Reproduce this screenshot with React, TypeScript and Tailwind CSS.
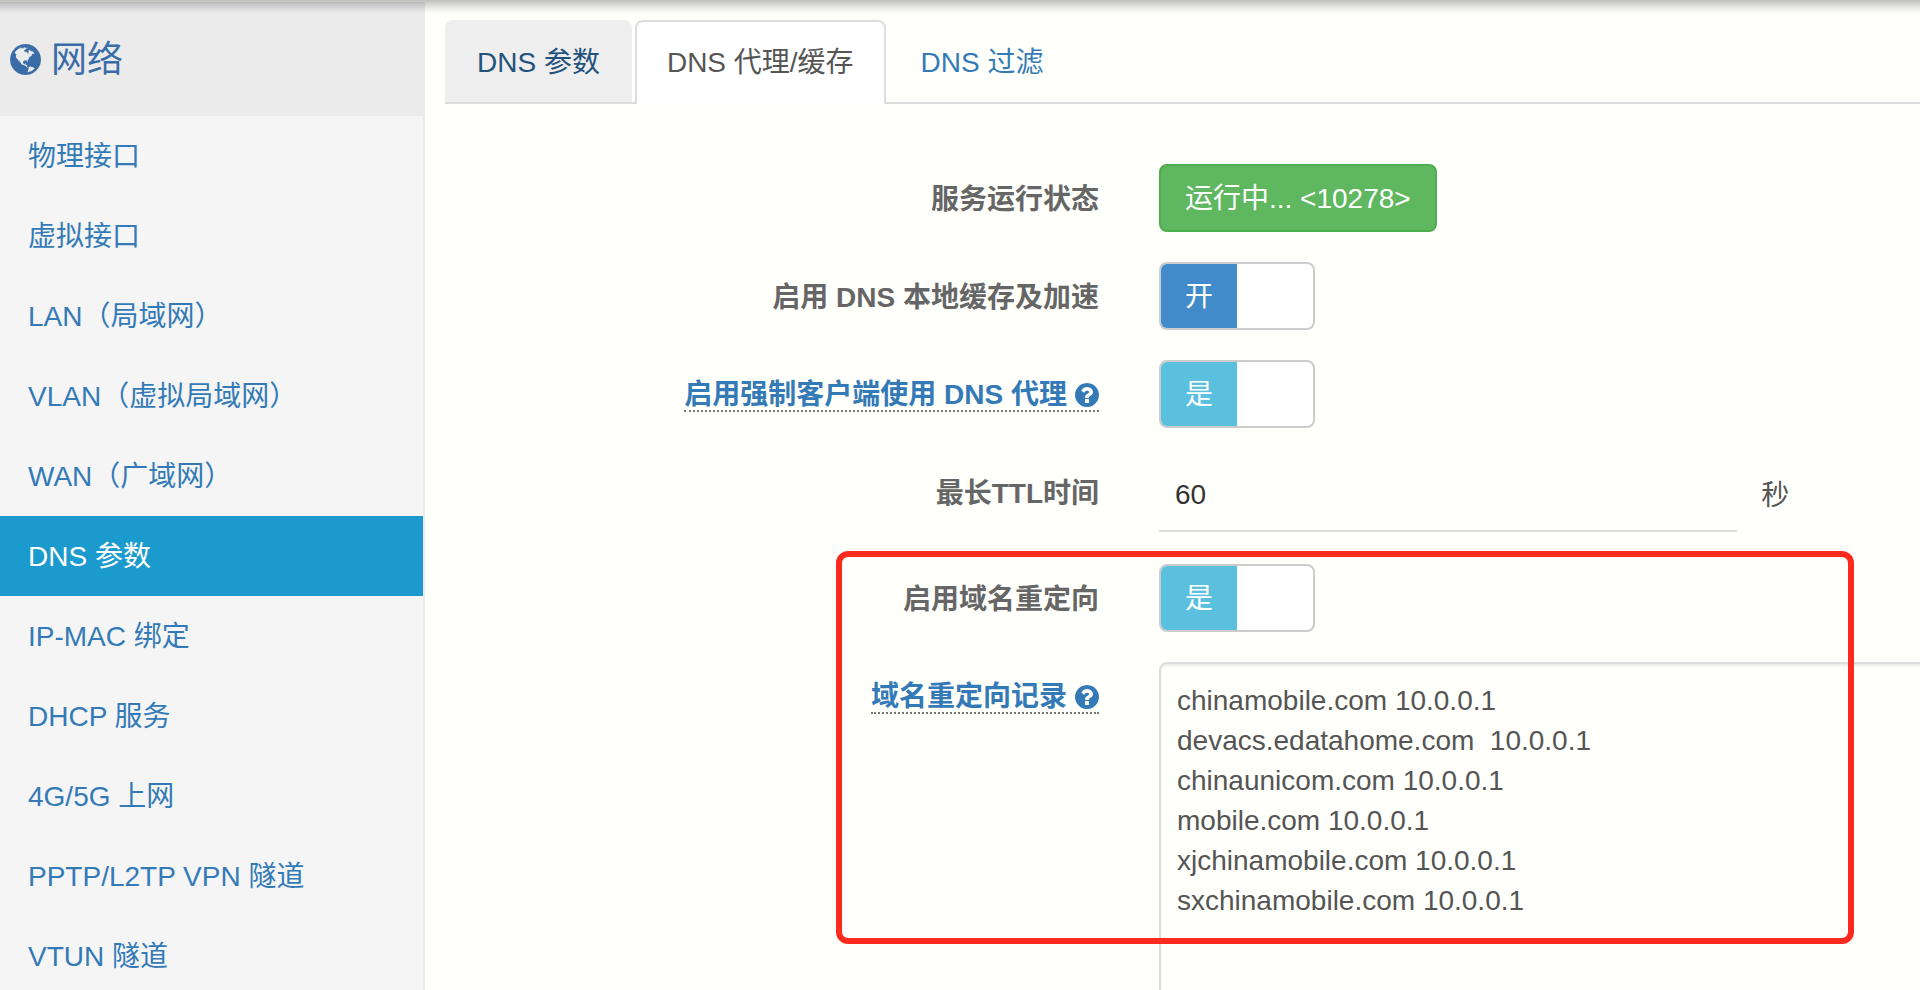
import { useState } from "react";

const GLOBE_PATH =
  "M768 128q209 0 385.5 103t279.5 279.5 103 385.5-103 385.5-279.5 279.5-385.5 103-385.5-103-279.5-279.5-103-385.5 103-385.5 279.5-279.5 385.5-103zm274 521q-2 1-9.5 9.5t-13.5 9.5q2 0 4.5-5t5-11 3.5-7q6-7 22-15 14-6 52-12 34-8 51 11-2-2 9.5-13t14.5-12q3-2 15-4.5t15-7.5l2-22q-12 1-17.5-7t-6.5-21q0 2-6 8 0-7-4.5-8t-11.5 1-9 1q-10-3-15-7.5t-8-16.5-4-15q-2-5-9.5-11t-9.5-10q-1-2-2.5-5.5t-3-6.5-4-5.5-5.5-2.5-7 5-7.5 10-4.5 5q-3-2-6-1.5t-4.5 1-4.5 3-5 3.5q-3 2-8.5 3t-8.5 2q15-5-1-11-10-4-16-3 9-4 7.5-12t-8.5-14h5q-1-4-8.5-8.5t-17.5-8.5-13-6q-8-5-34-9.5t-33-.5q-5 6-4.5 10.5t4 14 3.5 12.5q1 6-5.5 13t-6.5 12q0 7 14 15.5t10 21.5q-3 8-16 16t-16 12q-5 8-1.5 18.5t10.5 16.5q2 2 1.5 4t-3.5 4.5-5.5 4-6.5 3.5l-3 2q-11 5-20.5-6t-13.5-26q-7-25-16-30-23-8-29 1-5-13-41-26-25-9-58-4 6-1 0-15-7-15-19-12 3-6 4-17.5t1-13.5q3-13 12-23 1-1 7-8.5t9.5-13.5.5-6q35 4 50-11 5-5 11.5-17t10.5-17q9-6 14-5.5t14.5 5.5 14.5 5q14 1 15.5-11t-7.5-20q12 1 3-17-4-7-8-9-12-4-27 5-8 4 2 8-1-1-9.5 10.5t-16.5 17.5-16-5q-1-1-5.5-13.5t-9.5-13.5q-8 0-16 15 3-8-11-15t-24-8q19-12-8-27-7-4-20.5-5t-19.5 4q-5 7-5.5 11.5t5 8 10.5 5.5 11.5 4 8.5 3q14 10 8 14-2 1-8.5 3.5t-11.5 4.5-6 4q-3 4 0 14t-2 14q-5-5-9-17.5t-7-16.5q7 9-25 6l-10-1q-4 0-16 2t-20.5 1-13.5-8q-4-8 0-20 1-4 4-2-4-3-11-9.5t-10-8.5q-46 15-94 41 6 1 12-1 5-2 13-6.5t10-5.5q34-14 42-7l5-5q14 16 20 25-7-4-30-1-20 6-22 12 7 12 5 18-4-3-11.5-10t-14.5-11-15-5q-16 0-22 1-146 80-235 222 7 7 12 8 4 1 5 9t2.5 11 11.5-3q9 8 3 19 1-1 44 27 19 17 21 21 3 11-10 18-1-2-9-9t-9-4q-3 5 .5 18.5t10.5 12.5q-7 0-9.5 16t-2.5 35.5-1 23.5l2 1q-3 12 5.5 34.5t21.5 19.5q-13 3 20 43 6 8 8 9 3 2 12 7.5t15 10 10 10.5q4 5 10 22.5t14 23.5q-2 6 9.5 20t10.5 23q-1 0-2.5 1t-2.5 1q3 7 15.5 14t15.5 13q1 3 2 10t3 11 8 2q2-20-24-62-15-25-17-29-3-5-5.5-15.5t-4.5-14.5q2 0 6 1.5t8.5 3.5 7.5 4 2 3q-3 7 2 17.5t12 18.5 17 19 12 13q6 6 14 19.5t0 13.5q9 0 20 10.5t17 19.5q5 8 8 26t5 24q2 7 8.5 13.5t12.5 9.5l16 8 13 7q5 2 18.5 10.5t21.5 11.5q10 4 16 4t14.5-2.5 13.5-3.5q15-2 29 15t21 21q36 19 55 11-2 1 .5 7.5t8 15.5 9 14.5 5.5 8.5q5 6 18 15t18 15q6-4 7-9-3 8 7 20t18 10q14-3 14-32-31 15-49-18 0-1-2.5-5.5t-4-8.5-2.5-8.5 0-7.5 5-3q9 0 10-3.5t-2-12.5-4-13q-1-8-11-20t-12-15q-5 9-16 8t-16-9q0 1-1.5 5.5t-1.5 6.5q-13 0-15-1 1-3 2.5-17.5t3.5-22.5q1-4 5.5-12t7.5-14.5 4-12.5-4.5-9.5-17.5-2.5q-19 1-26 20-1 3-3 10.5t-5 11.5-9 7q-7 3-24 2t-24-5q-13-8-22.5-29t-9.5-37q0-10 2.5-26.5t3-25-5.5-24.5q3-2 9-9.5t10-10.5q2-1 4.5-1.5t4.5 0 4-1.5 3-6q-1-1-4-3-3-3-4-3 7 3 28.5-1.5t27.5 1.5q15 11 22-2 0-1-2.5-9.5t-.5-13.5q5 27 29 9 3 3 15.5 5t17.5 5q3 2 7 5.5t5.5 4.5 5-.5 8.5-6.5q10 14 12 24 11 40 19 44 7 3 11 2t4.5-9.5 0-14-1.5-12.5l-1-8v-18l-1-8q-15-3-18.5-12t1.5-18.5 15-18.5q1-1 8-3.5t15.5-6.5 12.5-8q21-19 15-35 7 0 11-9-1 0-5-3t-7.5-5-4.5-2q9-5 2-16 5-3 7.5-11t7.5-10q9 12 21 2 8-8 1-16 5-7 20.5-10.5t18.5-9.5q7 2 8-2t1-12 3-12q4-5 15-9t13-5l17-11q3-4 0-4 18 2 31-11 10-11-6-20 3-6-3-9.5t-15-5.5q3-1 11.5-.5t10.5-1.5q15-10-7-16-17-5-43 12zm-163 877q206-36 351-189-3-3-12.5-4.5t-12.5-3.5q-18-7-24-8 1-7-2.5-13t-8-9-12.5-8-11-7q-2-2-7-6t-7-5.5-7.5-4.5-8.5-2-10 1l-3 1q-3 1-5.5 2.5t-5.5 3-4 3 0 2.5q-21-17-36-22-5-1-11-5.5t-10.5-7-10-1.5-11.5 7q-5 5-6 15t-2 13q-7-5 0-17.5t2-18.5q-3-6-10.5-4.5t-12 4.5-11.5 8.5-9 6.5-8.5 5.5-8.5 7.5q-3 4-6 12t-5 11q-2-4-11.5-6.5t-9.5-5.5q2 10 4 35t5 38q7 31-12 48-27 25-29 40-4 22 12 26 0 7-8 20.5t-7 21.5q0 6 2 16z";

const QUESTION_PATH =
  "M896 1376v-192q0-14-9-23t-23-9h-192q-14 0-23 9t-9 23v192q0 14 9 23t23 9h192q14 0 23-9t9-23zm256-672q0-88-55.5-163t-138.5-116-170-41q-243 0-371 213-15 24 8 42l132 100q7 6 19 6 16 0 25-12 53-68 86-92 34-24 86-24 48 0 85.5 26t37.5 59q0 38-20 61t-68 45q-63 28-115.5 86.5t-52.5 125.5v36q0 14 9 23t23 9h192q14 0 23-9t9-23q0-19 21.5-49.5t54.5-49.5q32-18 49-28.5t46-35 44.5-48 28-60.5 12.5-81zm384 192q0 209-103 385.5t-279.5 279.5-385.5 103-385.5-103-279.5-279.5-103-385.5 103-385.5 279.5-279.5 385.5-103 385.5 103 279.5 279.5 103 385.5z";

const menu = [
  "物理接口",
  "虚拟接口",
  "LAN（局域网）",
  "VLAN（虚拟局域网）",
  "WAN（广域网）",
  "DNS 参数",
  "IP-MAC 绑定",
  "DHCP 服务",
  "4G/5G 上网",
  "PPTP/L2TP VPN 隧道",
  "VTUN 隧道",
];

const records = [
  "chinamobile.com 10.0.0.1",
  "devacs.edatahome.com  10.0.0.1",
  "chinaunicom.com 10.0.0.1",
  "mobile.com 10.0.0.1",
  "xjchinamobile.com 10.0.0.1",
  "sxchinamobile.com 10.0.0.1",
].join("\n");

function Icon({ path, className }: { path: string; className: string }) {
  return (
    <svg aria-hidden viewBox="0 128 1536 1536" fill="currentColor" className={className}>
      <path d={path} />
    </svg>
  );
}

function Row({
  label,
  htmlFor,
  help,
  children,
}: {
  label: string;
  htmlFor: string;
  help?: boolean;
  children: React.ReactNode;
}) {
  return (
    <div className="flex gap-15">
      <div className="flex w-[44.34%] shrink-0 items-start justify-end font-bold">
        {help ? (
          <label
            htmlFor={htmlFor}
            className="mt-5 flex items-center gap-2 border-b-2 border-dotted border-[#777] leading-[30px] text-[#337ab7]"
          >
            {label}
            <Icon path={QUESTION_PATH} className="size-6" />
          </label>
        ) : (
          <label htmlFor={htmlFor} className="mt-4 text-[#666]">
            {label}
          </label>
        )}
      </div>
      <div className="min-w-0 flex-1">{children}</div>
    </div>
  );
}

function Toggle({ id, on, color }: { id: string; on: string; color: string }) {
  const [checked, setChecked] = useState(true);
  return (
    <button
      id={id}
      type="button"
      role="switch"
      aria-checked={checked}
      onClick={() => setChecked(!checked)}
      className="flex h-17 w-39 cursor-pointer overflow-hidden rounded-lg border-2 border-[#ccc] bg-white"
    >
      {checked && (
        <span className={`flex h-full w-1/2 items-center justify-center pt-0.5 text-white ${color}`}>{on}</span>
      )}
    </button>
  );
}

function Sidebar() {
  return (
    <aside className="mt-0.5 w-[425px] shrink-0 border-r-2 border-[#ebebeb] bg-[#f5f5f5]">
      <h2 className="-mr-0.5 flex h-[114px] items-center gap-2.5 bg-[#ebebeb] pl-2.5 text-4xl text-[#3a6da8]">
        <Icon path={GLOBE_PATH} className="size-[31px]" />
        <span className="pt-0.5">网络</span>
      </h2>
      <nav>
        {menu.map((item) => (
          <a
            key={item}
            href="#"
            className={`block pt-[21px] pb-[19px] pl-7 ${item === "DNS 参数" ? "bg-[#1a9acd] text-white" : "text-[#337ab7]"}`}
          >
            {item}
          </a>
        ))}
      </nav>
    </aside>
  );
}

function Tabs() {
  return (
    <div role="tablist" className="flex gap-[3px] border-b-2 border-[#ddd]">
      <button role="tab" className="rounded-t-lg bg-[#eee] px-8 pt-[23px] pb-[19px] text-[#23527c]">
        DNS 参数
      </button>
      <button
        role="tab"
        aria-selected
        className="-mb-0.5 rounded-t-lg border-2 border-b-0 border-[#ddd] bg-white px-7.5 pt-[21px] pb-[21px] text-[#555]"
      >
        DNS 代理/缓存
      </button>
      <button role="tab" className="px-8 pt-[23px] pb-[19px] text-[#337ab7]">
        DNS 过滤
      </button>
    </div>
  );
}

export default function App() {
  return (
    <div className="relative flex h-screen overflow-hidden bg-[#fffffb] font-['Liberation_Sans','Noto_Sans_CJK_SC',sans-serif] text-[28px] leading-10 text-[#555]">
      <Sidebar />
      <main className="min-w-0 flex-1 pt-5 pl-5">
        <Tabs />
        <form className="flex flex-col gap-7.5 pt-15">
          <Row label="服务运行状态" htmlFor="status">
            <button
              id="status"
              type="button"
              className="h-17 rounded-lg border-2 border-[#4cae4c] bg-[#5fb760] px-6 pt-0.5 text-white"
            >
              运行中... &lt;10278&gt;
            </button>
          </Row>
          <Row label="启用 DNS 本地缓存及加速" htmlFor="cache">
            <Toggle id="cache" on="开" color="bg-[#428bca]" />
          </Row>
          <Row label="启用强制客户端使用 DNS 代理" htmlFor="force" help>
            <Toggle id="force" on="是" color="bg-[#5bc0de]" />
          </Row>
          <Row label="最长TTL时间" htmlFor="ttl">
            <div className="flex items-center gap-6 pb-0.5">
              <input
                id="ttl"
                defaultValue="60"
                className="h-[74px] w-[76%] border-b-2 border-[#ddd] bg-transparent px-4 pt-0.5 text-[#333] outline-none"
              />
              <span className="pt-0.5">秒</span>
            </div>
          </Row>
          <div className="relative flex flex-col gap-7.5">
            <Row label="启用域名重定向" htmlFor="redirect">
              <Toggle id="redirect" on="是" color="bg-[#5bc0de]" />
            </Row>
            <Row label="域名重定向记录" htmlFor="records" help>
              <div className="-mr-5">
                <textarea
                  id="records"
                  rows={10}
                  defaultValue={records}
                  className="block w-full resize-none rounded-lg border-2 border-[#ddd] bg-transparent px-4 pt-[17px] shadow-[inset_0_2px_2px_rgba(0,0,0,0.075)] outline-none"
                />
              </div>
            </Row>
            <div className="pointer-events-none absolute -top-[13px] right-[66px] left-[26.5%] h-[393px] rounded-xl border-6 border-[#ff2a1e]" />
          </div>
        </form>
      </main>
      <div className="pointer-events-none absolute inset-x-0 top-0 h-3.5 bg-linear-to-b from-black/25 via-black/10 to-transparent" />
    </div>
  );
}
